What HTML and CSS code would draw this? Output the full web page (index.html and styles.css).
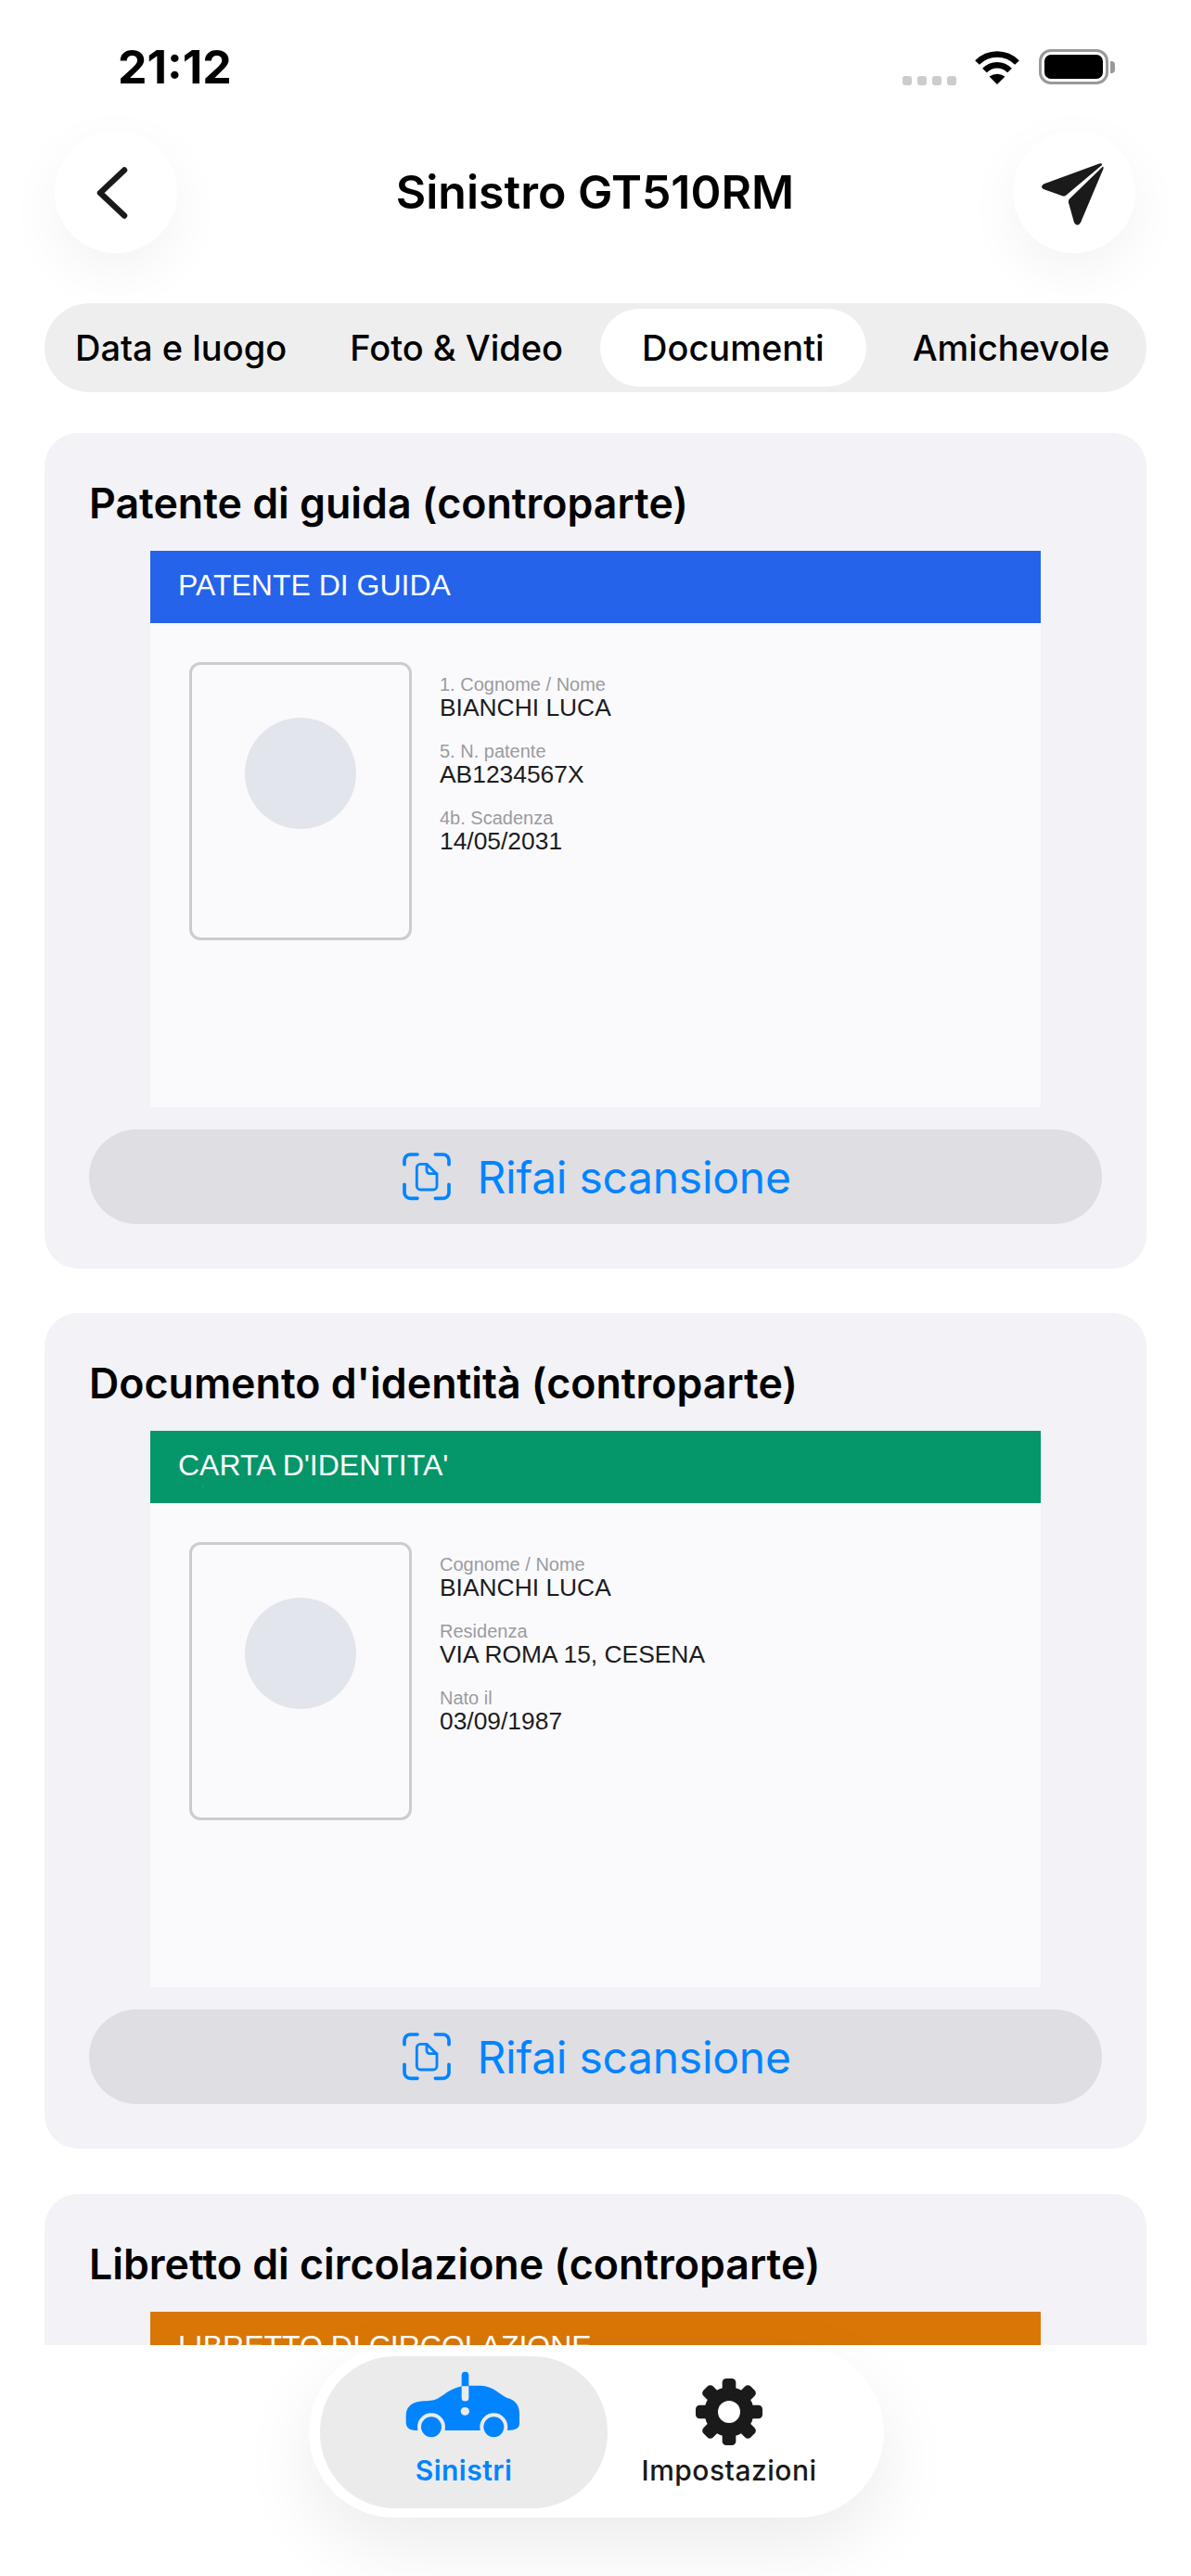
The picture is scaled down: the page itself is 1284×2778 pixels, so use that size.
FILE: index.html
```html
<!DOCTYPE html>
<html lang="it">
<head>
    <meta charset="UTF-8">
    <meta name="viewport" content="width=device-width, initial-scale=1.0">
    <title>Sinistro GT510RM</title>
    <link rel="stylesheet" href="styles.css">
</head>
<body>
<div class="app">

    <!-- Status bar -->
    <div class="status-bar">
        <span class="time">21:12</span>
        <div class="status-icons">
            <div class="signal"><i></i><i></i><i></i><i></i></div>
            <svg class="wifi" width="50" height="38" viewBox="0 0 50 38">
                <path d="M3.5 14.5A30 30 0 0 1 46.500 14.500" fill="none" stroke="#000" stroke-width="6.500"/>
                <path d="M11.500 23A18.500 18.500 0 0 1 38.500 23" fill="none" stroke="#000" stroke-width="6.500"/>
                <path d="M16.500 29.500Q25 24 33.500 29.500L25 38Z" fill="#000"/>
            </svg>
            <div class="battery"><div class="battery-level"></div></div>
            <div class="battery-tip"></div>
        </div>
    </div>

    <!-- Header -->
    <div class="nav">
        <button class="round-btn">
            <svg width="44" height="64" viewBox="0 0 44 64">
                <path d="M31 8.500L5 33L31 57.500" fill="none" stroke="#1a1a1a" stroke-width="6.500" stroke-linecap="round" stroke-linejoin="round"/>
            </svg>
        </button>
        <h1 class="nav-title">Sinistro GT510RM</h1>
        <button class="round-btn">
            <svg class="send-icon" width="68" height="69" viewBox="0 0 68 69">
                <path d="M63 1.500L3 23.500Q-1 26.500 3 29L24 36.500Q26 37 28 35L66 3Q66.500 0.500 63 1.500Z" fill="#1a1a1a"/>
                <path d="M66.500 5L31 39.500Q29.500 41 30 43.500L36 65Q39.500 70.500 43 65L67.500 7Q68 4 66.500 5Z" fill="#1a1a1a"/>
            </svg>
        </button>
    </div>

    <!-- Tabs -->
    <div class="tabs">
        <span class="tab">Data e luogo</span>
        <span class="tab">Foto &amp; Video</span>
        <span class="tab tab-active">Documenti</span>
        <span class="tab">Amichevole</span>
    </div>

    <!-- Documents -->
    <div class="content">
        <section class="card">
            <h2 class="card-title">Patente di guida (controparte)</h2>
            <div class="doc">
                <div class="doc-header doc-blue">PATENTE DI GUIDA</div>
                <div class="doc-body">
                    <div class="photo"><div class="photo-head"></div></div>
                    <div class="fields">
                        <div class="field"><span class="field-label">1. Cognome / Nome</span><span class="field-value">BIANCHI LUCA</span></div>
                        <div class="field"><span class="field-label">5. N. patente</span><span class="field-value">AB1234567X</span></div>
                        <div class="field"><span class="field-label">4b. Scadenza</span><span class="field-value">14/05/2031</span></div>
                    </div>
                </div>
            </div>
            <button class="scan-btn">
                <svg width="70" height="70" viewBox="0 0 210 210" fill="none" stroke="#0084ff" stroke-linecap="round" stroke-linejoin="round">
                    <path stroke-width="11" d="M33 65V52a19 19 0 0 1 19-19H75M133 33h25a19 19 0 0 1 19 19V65M33 130v26a19 19 0 0 0 19 19H75M133 175h25a19 19 0 0 0 19-19V130"/>
                    <path stroke-width="8.500" d="M85 64H105L138 97V135a12 12 0 0 1-12 12H85a12 12 0 0 1-12-12V76a12 12 0 0 1 12-12ZM105 64V85a10 10 0 0 0 10 10H138"/>
                </svg>
                Rifai scansione
            </button>
        </section>

        <section class="card">
            <h2 class="card-title">Documento d'identità (controparte)</h2>
            <div class="doc">
                <div class="doc-header doc-green">CARTA D'IDENTITA'</div>
                <div class="doc-body">
                    <div class="photo"><div class="photo-head"></div></div>
                    <div class="fields">
                        <div class="field"><span class="field-label">Cognome / Nome</span><span class="field-value">BIANCHI LUCA</span></div>
                        <div class="field"><span class="field-label">Residenza</span><span class="field-value">VIA ROMA 15, CESENA</span></div>
                        <div class="field"><span class="field-label">Nato il</span><span class="field-value">03/09/1987</span></div>
                    </div>
                </div>
            </div>
            <button class="scan-btn">
                <svg width="70" height="70" viewBox="0 0 210 210" fill="none" stroke="#0084ff" stroke-linecap="round" stroke-linejoin="round">
                    <path stroke-width="11" d="M33 65V52a19 19 0 0 1 19-19H75M133 33h25a19 19 0 0 1 19 19V65M33 130v26a19 19 0 0 0 19 19H75M133 175h25a19 19 0 0 0 19-19V130"/>
                    <path stroke-width="8.500" d="M85 64H105L138 97V135a12 12 0 0 1-12 12H85a12 12 0 0 1-12-12V76a12 12 0 0 1 12-12ZM105 64V85a10 10 0 0 0 10 10H138"/>
                </svg>
                Rifai scansione
            </button>
        </section>

        <section class="card">
            <h2 class="card-title">Libretto di circolazione (controparte)</h2>
            <div class="doc">
                <div class="doc-header doc-orange">LIBRETTO DI CIRCOLAZIONE</div>
            </div>
        </section>
    </div>

    <!-- Bottom tab bar -->
    <div class="bottom">
        <div class="tabbar">
            <div class="tabbar-item tabbar-active">
                <svg width="150" height="90" viewBox="0 0 450 270">
                    <path d="M38 165C38 135 60 120 95 118C120 116 130 115 140 110C170 92 190 70 235 68H280C320 70 340 95 365 108C395 115 405 135 405 160V190C405 205 395 213 365 213H75C50 213 38 205 38 185Z" fill="#0084ff"/>
                    <circle cx="120" cy="202" r="39" fill="#0084ff" stroke="#ebebeb" stroke-width="12"/>
                    <circle cx="322" cy="202" r="39" fill="#0084ff" stroke="#ebebeb" stroke-width="12"/>
                    <path d="M218 80V35a11.500 11.500 0 0 1 23 0V80Z" fill="#0084ff"/>
                    <path d="M218 70H241V107a11.500 11.500 0 0 1-23 0Z" fill="#ebebeb"/>
                    <ellipse cx="229" cy="151" rx="14" ry="13" fill="#ebebeb"/>
                </svg>
                <span class="tabbar-label">Sinistri</span>
            </div>
            <div class="tabbar-item">
                <svg class="gear-icon" width="95" height="90" viewBox="0 0 285 270">
                    <g fill="#1a1a1a">
                        <circle cx="141" cy="138" r="80"/>
                        <rect x="119" y="30" width="44" height="60" rx="13"/>
                        <rect x="119" y="30" width="44" height="60" rx="13" transform="rotate(45 141 138)"/>
                        <rect x="119" y="30" width="44" height="60" rx="13" transform="rotate(90 141 138)"/>
                        <rect x="119" y="30" width="44" height="60" rx="13" transform="rotate(135 141 138)"/>
                        <rect x="119" y="30" width="44" height="60" rx="13" transform="rotate(180 141 138)"/>
                        <rect x="119" y="30" width="44" height="60" rx="13" transform="rotate(225 141 138)"/>
                        <rect x="119" y="30" width="44" height="60" rx="13" transform="rotate(270 141 138)"/>
                        <rect x="119" y="30" width="44" height="60" rx="13" transform="rotate(315 141 138)"/>
                    </g>
                    <circle cx="141" cy="138" r="36" fill="#fff"/>
                </svg>
                <span class="tabbar-label">Impostazioni</span>
            </div>
        </div>
    </div>

</div>
</body>
</html>
```

FILE: styles.css
```css
body {
    margin: 0;
    padding: 0;
    background-color: #fff;
    font-family: Inter, "Noto Sans", sans-serif;
    color: #000;
}
.app {
    width: 1284px;
    height: 2778px;
    display: flex;
    flex-direction: column;
    overflow: hidden;
}

/* status bar */
.status-bar {
    height: 141px;
    flex-shrink: 0;
    display: flex;
    justify-content: space-between;
    align-items: flex-start;
    padding: 0 82px 0 127px;
    box-sizing: border-box;
}
.time {
    margin-top: 42px;
    font-size: 50px;
    line-height: 60px;
    font-weight: 700;
}
.status-icons {
    display: flex;
    align-items: flex-start;
    margin-top: 53px;
}
.signal {
    display: flex;
    gap: 6px;
    margin: 29px 19px 0 0;
}
.signal i {
    width: 10px;
    height: 10px;
    border-radius: 3px;
    background-color: #ccc;
}
.wifi {
    margin-right: 20px;
}
.battery {
    width: 75px;
    height: 38px;
    padding: 3px;
    box-sizing: border-box;
    border: 3px solid #999;
    border-radius: 13px;
}
.battery-level {
    height: 100%;
    background-color: #000;
    border-radius: 7px;
}
.battery-tip {
    width: 5px;
    height: 13px;
    margin: 13px 0 0 2px;
    background-color: #999;
    border-radius: 0 4px 4px 0;
}

/* header */
.nav {
    height: 132px;
    flex-shrink: 0;
    display: flex;
    justify-content: space-between;
    align-items: center;
    padding: 0 60px 0 59px;
}
.round-btn {
    width: 132px;
    height: 132px;
    padding: 0;
    border: none;
    border-radius: 50%;
    background-color: #fff;
    box-shadow: 0 20px 60px rgba(0,0,0,0.05);
    display: flex;
    align-items: center;
    justify-content: center;
}
.send-icon {
    margin: 4px 4px 0 0;
}
.nav-title {
    margin: 0;
    font-size: 50px;
    line-height: 60px;
    font-weight: 600;
}

/* tabs */
.tabs {
    margin: 54px 48px 0;
    height: 96px;
    flex-shrink: 0;
    box-sizing: border-box;
    padding: 6px 0 6px 33px;
    display: flex;
    align-items: stretch;
    background-color: #eee;
    border-radius: 48px;
    position: relative;
}
.tab {
    font-size: 38px;
    line-height: 84px;
    font-weight: 500;
    white-space: nowrap;
}
.tab:nth-child(2) {
    margin-left: 68px;
}
.tab:nth-child(3) {
    margin-left: 40px;
}
.tab:nth-child(4) {
    margin-left: 50px;
}
.tab-active {
    padding: 0 45px;
    background-color: #fff;
    border-radius: 42px;
}

/* cards */
.content {
    flex: 1;
    min-height: 0;
    overflow: hidden;
    padding: 44px 48px 0;
}
.card {
    background-color: #f2f2f7;
    border-radius: 36px;
    padding: 48px 48px 48px;
    margin-bottom: 48.330px;
}
.card-title {
    margin: 0 0 23px;
    font-size: 44.700px;
    line-height: 56px;
    font-weight: 600;
}
.doc {
    width: 960px;
    height: 600px;
    margin: 0 auto;
    background-color: #fafafc;
    font-family: "Liberation Sans", Arial, sans-serif;
}
.doc-header {
    height: 78px;
    padding-left: 30px;
    color: #fff;
    font-size: 32px;
    line-height: 74px;
}
.doc-blue {
    background-color: #2563eb;
}
.doc-green {
    background-color: #059669;
}
.doc-orange {
    background-color: #d97706;
}
.doc-body {
    display: flex;
    gap: 30px;
    padding: 42px;
}
.photo {
    width: 240px;
    height: 300px;
    box-sizing: border-box;
    border: 3px solid #ccc;
    border-radius: 12px;
    padding-top: 57px;
}
.photo-head {
    width: 120px;
    height: 120px;
    margin: 0 auto;
    background-color: #e2e5ec;
    border-radius: 50%;
}
.fields {
    display: flex;
    flex-direction: column;
    gap: 22px;
    padding-top: 13px;
}
.field {
    display: flex;
    flex-direction: column;
}
.field-label {
    color: #9a9aa0;
    font-size: 20px;
    line-height: 22px;
}
.field-value {
    color: #1c1c1e;
    font-size: 26.400px;
    line-height: 28px;
}
.scan-btn {
    width: 100%;
    height: 102px;
    margin-top: 24px;
    padding: 0 6px 0 0;
    border: none;
    border-radius: 51px;
    background-color: #dedee3;
    color: #0084ff;
    font-family: Inter, "Noto Sans", sans-serif;
    font-size: 48px;
    letter-spacing: -0.270px;
    display: flex;
    align-items: center;
    justify-content: center;
    gap: 19px;
}

/* bottom bar */
.bottom {
    height: 249px;
    flex-shrink: 0;
    background-color: #fff;
    position: relative;
    padding-top: 2px;
    box-sizing: border-box;
}
.tabbar {
    width: 620px;
    height: 184px;
    margin-left: 333px;
    box-sizing: border-box;
    padding: 10px 36px 10px 12px;
    display: flex;
    background-color: #fff;
    border-radius: 92px;
    box-shadow: 0 30px 80px rgba(0,0,0,0.08);
}
.tabbar-item {
    flex: 1;
    display: flex;
    flex-direction: column;
    align-items: center;
    padding-top: 9px;
    border-radius: 81px;
}
.tabbar-active {
    flex: 0 0 310px;
    background-color: #ebebeb;
}
.gear-icon {
    margin: 5px 0 -5px;
}
.tabbar-label {
    margin-top: 6px;
    font-size: 30px;
    line-height: 36px;
    font-weight: 500;
    letter-spacing: 0.500px;
    color: #1a1a1a;
}
.tabbar-active .tabbar-label {
    color: #0084ff;
    font-weight: 600;
}
```
